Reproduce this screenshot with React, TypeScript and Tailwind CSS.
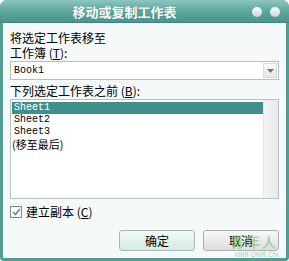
const CJK = { fontFamily: '"Noto Sans CJK SC", "Noto Sans", sans-serif' }
const MONO = { fontFamily: '"Liberation Mono", "Noto Sans CJK SC", monospace' }

const SHEETS = ['Sheet2', 'Sheet3']

const App = () => {
  return (
    <div className="h-[261px] w-[289px] bg-white" style={CJK}>
      <div className="flex h-full flex-col overflow-hidden rounded-t-[7px] rounded-b-[4px] bg-[#529c94]">
        {/* title bar */}
        <div className="relative flex h-[23px] shrink-0 items-center justify-center bg-gradient-to-b from-[#8cc6bf] via-[#5ea69e] to-[#4a958d] border-b border-[#3f857e]">
          <span className="ml-[-40px] text-[13px] font-bold leading-[15px] text-white [text-shadow:0_0_1px_#3d7f78]">
            移动或复制工作表
          </span>
          <div className="absolute right-[9px] top-[7px] flex gap-[8px]">
            <span className="h-[10px] w-[10px] rounded-full bg-gradient-to-b from-white to-[#c9d6d4]" />
            <span className="h-[10px] w-[10px] rounded-full bg-gradient-to-b from-white to-[#c9d6d4]" />
          </div>
        </div>

        {/* body */}
        <div className="mx-[3px] mb-[4px] flex flex-1 flex-col bg-[#f6f9f9] px-[7px] pt-[7px] text-[12px] leading-[15px] text-black">
          <div className="h-[15px]">将选定工作表移至</div>
          <div className="h-[15px]">工作簿 (<span className="underline">T</span>):</div>

          <div className="mt-[1px] flex h-[19px] items-center border border-[#b6c2c0] bg-white">
            <span className="flex-1 pl-[3px] text-[10px]" style={MONO}>Book1</span>
            <span className="mr-[1px] flex h-[15px] w-[14px] items-center justify-center border border-[#d4dcdb] bg-gradient-to-b from-[#fafafa] to-[#e3e7e6]">
              <svg width="7" height="4" viewBox="0 0 7 4"><path d="M0 0h7L3.5 4z" fill="#6d7675" /></svg>
            </span>
          </div>

          <div className="mt-[3px] h-[15px]">下列选定工作表之前 (<span className="underline">B</span>):</div>

          <div className="mt-[1px] flex h-[100px] border border-[#b6c2c0] bg-white">
            <div className="flex-1 pl-[1px] pt-[2px] leading-[12px]">
              <div className="flex h-[12px] items-center bg-[#3f8f8a] pl-[2px] text-[10px] text-white" style={MONO}>Sheet1</div>
              {SHEETS.map((s) => (
                <div key={s} className="flex h-[12px] items-center pl-[2px] text-[10px]" style={MONO}>{s}</div>
              ))}
              <div className="flex h-[12px] items-center text-[11px]">(移至最后)</div>
            </div>
            <div className="w-[15px] border-l border-[#e3e8e7] bg-gradient-to-r from-[#f1f3f3] to-[#e6eaea]" />
          </div>

          <div className="mt-[5px] flex items-center gap-[4px]">
            <span className="flex h-[12px] w-[12px] items-center justify-center border border-[#7c9290] bg-white">
              <svg width="9" height="8" viewBox="0 0 9 8"><path d="M1 4l2.5 2.5L8 1" stroke="#5e8d89" strokeWidth="1.6" fill="none" /></svg>
            </span>
            <span>建立副本 (<span className="underline">C</span>)</span>
          </div>

          <div className="mt-[11px] flex justify-end gap-[8px]">
            <button className="h-[21px] w-[76px] rounded-[3px] border border-[#a5b8b4] bg-gradient-to-b from-[#f2faf7] to-[#d3ebe2] text-[12px]">
              确定
            </button>
            <button className="relative h-[21px] w-[76px] rounded-[3px] border border-[#a9b1b0] bg-gradient-to-b from-[#f8f8f8] to-[#dedede] text-[12px]">
              取消
              {/* watermark */}
              <span className="absolute right-[0px] top-[3px] text-[14px] font-bold leading-[15px] tracking-[2px] text-[#7fbf7a]/60">青年人</span>
            </button>
          </div>
          <div className="flex justify-end pr-[1px]">
            <span className="text-[7px] leading-[7px] text-[#7fbf7a]/70" style={{ fontFamily: '"Liberation Sans", sans-serif' }}>
              IIIIIII QNR.CN
            </span>
          </div>
        </div>
      </div>
    </div>
  )
}

export default App
